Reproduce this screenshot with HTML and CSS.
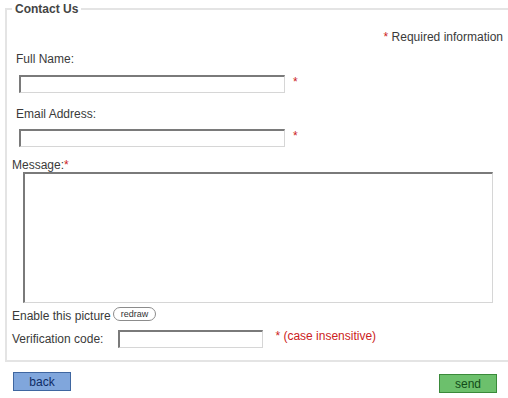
FILE: index.html
```html
<!DOCTYPE html>
<html lang="en">
<head>
    <meta charset="UTF-8">
    <meta name="viewport" content="width=device-width, initial-scale=1.0">
    <title>Contact Us</title>
    <link rel="stylesheet" href="styles.css">
</head>
<body>
    <form class="contact-form">
        <fieldset class="contact-box">
            <legend>Contact Us</legend>

            <p class="required-note"><span class="req">*</span> Required information</p>

            <div class="field">
                <label class="field-label" for="fullName">Full Name:</label>
                <div class="input-row">
                    <input type="text" id="fullName" class="text-input">
                    <span class="req star">*</span>
                </div>
            </div>

            <div class="field field-email">
                <label class="field-label" for="email">Email Address:</label>
                <div class="input-row">
                    <input type="text" id="email" class="text-input">
                    <span class="req star">*</span>
                </div>
            </div>

            <div class="message-group">
                <label class="message-label" for="message">Message:<span class="req">*</span></label>
                <textarea id="message" class="message-box"></textarea>
            </div>

            <div class="captcha-row">
                <span>Enable this picture</span>
                <button type="button" class="redraw">redraw</button>
            </div>

            <div class="verify-row">
                <label for="code">Verification code:</label>
                <input type="text" id="code" class="code-input">
                <span class="req verify-note">* (case insensitive)</span>
            </div>
        </fieldset>

        <div class="actions">
            <button type="button" class="btn btn-back">back</button>
            <button type="submit" class="btn btn-send">send</button>
        </div>
    </form>
</body>
</html>
```

FILE: styles.css
```css
body {
    margin: 0;
    padding: 2px 0 0 5px;
    font-family: 'Liberation Sans', Arial, sans-serif;
    font-size: 12px;
    line-height: 14px;
    color: #3a3a3a;
    background: #ffffff;
}

/* Caja del formulario */
.contact-box {
    margin: 0;
    padding: 0 0 12px 5px;
    border: 2px solid #e4e4e4;
    border-right: none;
}

.contact-box legend {
    padding: 0 3px;
    font-weight: bold;
    color: #444444;
}

.req {
    color: #cc2222;
}

.required-note {
    margin: 14px 5px 0 0;
    text-align: right;
}

/* Campos */
.field {
    margin-top: 8px;
}

.field-email {
    margin-top: 14px;
}

.field-label {
    display: block;
    margin-left: 4px;
}

.input-row {
    display: flex;
    align-items: flex-start;
    margin: 9px 0 0 7px;
}

.field-email .input-row {
    margin-top: 8px;
}

.text-input,
.code-input,
.message-box {
    box-sizing: border-box;
    margin: 0;
    padding: 1px 3px;
    font-family: inherit;
    font-size: 12px;
    background: #ffffff;
    border-top: 2px solid #7a7a7a;
    border-left: 2px solid #7a7a7a;
    border-bottom: 1px solid #d6d6d6;
    border-right: 1px solid #d6d6d6;
    outline: none;
}

.text-input {
    width: 266px;
    height: 18px;
}

.star {
    margin: 0 0 0 8px;
}

.message-group {
    margin-top: 11px;
}

.message-label {
    display: block;
}

.message-box {
    display: block;
    width: 470px;
    height: 131px;
    margin: 0 0 0 11px;
    resize: none;
}

/* Imagen de verificación */
.captcha-row {
    display: flex;
    align-items: flex-start;
    margin-top: 6px;
}

.redraw {
    margin: -2px 0 0 2px;
    padding: 0 7px;
    height: 14px;
    font-family: inherit;
    font-size: 9px;
    line-height: 12px;
    color: #333333;
    background: #ffffff;
    border: 1px solid #8c8c8c;
    border-radius: 8px;
}

.verify-row {
    display: flex;
    align-items: center;
    margin-top: 7px;
}

.code-input {
    width: 145px;
    height: 18px;
    margin-left: 15px;
}

.verify-note {
    margin: -6px 0 0 12px;
}

/* Botones */
.actions {
    display: flex;
    justify-content: space-between;
    align-items: flex-start;
    padding: 10px 11px 0 8px;
}

.btn {
    width: 58px;
    height: 19px;
    padding: 0;
    font-family: inherit;
    font-size: 12px;
    line-height: 14px;
    cursor: pointer;
}

.btn-back {
    background: #80a6dc;
    border: 1px solid #3f66a0;
    color: #0f2c66;
}

.btn-send {
    margin-top: 2px;
    background: #6cc06c;
    border: 1px solid #3a8a3a;
    color: #124c18;
}
```
